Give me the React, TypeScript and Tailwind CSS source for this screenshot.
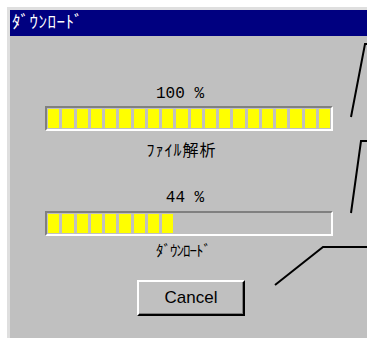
import React from "react";

const jp = { fontFamily: '"Noto Sans CJK JP", "Liberation Sans", sans-serif' };
const mono = { fontFamily: '"Liberation Mono", monospace' };

function ProgressBar({ filled }: { filled: number }) {
  return (
    <div className="h-[25px] w-[288px] border-2 border-t-[#808080] border-l-[#808080] border-b-white border-r-white bg-[#c0c0c0] px-[1px] py-[1px] flex gap-[3px]">
      {Array.from({ length: 20 }).map((_, i) => (
        <div key={i} className={i < filled ? "flex-1 bg-[#ffff00]" : "flex-1"} />
      ))}
    </div>
  );
}

export default function App() {
  return (
    <div className="relative w-[367px] h-[338px] bg-white overflow-hidden">
      <div className="absolute left-[7px] top-[7px] w-[400px] h-[360px] border-l-[3px] border-t-[3px] border-[#dfdfdf] flex flex-col">
        <div className="h-[26px] bg-[#000080] text-white text-[17px] leading-[20px] tracking-[0.5px] pl-[2px] pt-[1px]" style={jp}>
          ﾀﾞｳﾝﾛｰﾄﾞ
        </div>
        <div className="flex-1 bg-[#c0c0c0] pl-[35px] pt-[48px] flex flex-col">
          <div className="w-[288px] h-[20px] leading-[20px] text-center pr-[18px] text-[16px] text-black" style={mono}>
            100 %
          </div>
          <div className="mt-[2px]">
            <ProgressBar filled={20} />
          </div>
          <div className="mt-[8px] w-[288px] h-[20px] leading-[20px] text-center pr-[15px] text-[16px] tracking-[1px] text-black" style={jp}>
            ﾌｧｲﾙ解析
          </div>
          <div className="mt-[29px] w-[288px] h-[20px] leading-[20px] text-center pr-[8px] text-[16px] text-black" style={mono}>
            44 %
          </div>
          <div className="mt-[3px]">
            <ProgressBar filled={9} />
          </div>
          <div className="mt-[4px] w-[288px] h-[20px] leading-[20px] text-center pr-[12px] text-[15px] tracking-[-1px] text-black" style={jp}>
            ﾀﾞｳﾝﾛｰﾄﾞ
          </div>
          <div className="mt-[20px] ml-[92px]">
            <button className="w-[108px] h-[36px] border-2 border-t-white border-l-white border-b-black border-r-black bg-[#c0c0c0] shadow-[inset_-1px_-1px_0_#808080] text-[17px] text-black" style={{ fontFamily: '"Liberation Sans", Arial, sans-serif' }}>
              Cancel
            </button>
          </div>
        </div>
      </div>
      <svg className="absolute left-0 top-0" width="367" height="338" viewBox="0 0 367 338">
        <polyline points="351,117 365,44 367,44" fill="none" stroke="black" strokeWidth="2" />
        <polyline points="351,213 361,141 367,141" fill="none" stroke="black" strokeWidth="2" />
        <polyline points="275,285 323,247 367,247" fill="none" stroke="black" strokeWidth="2" />
      </svg>
    </div>
  );
}
